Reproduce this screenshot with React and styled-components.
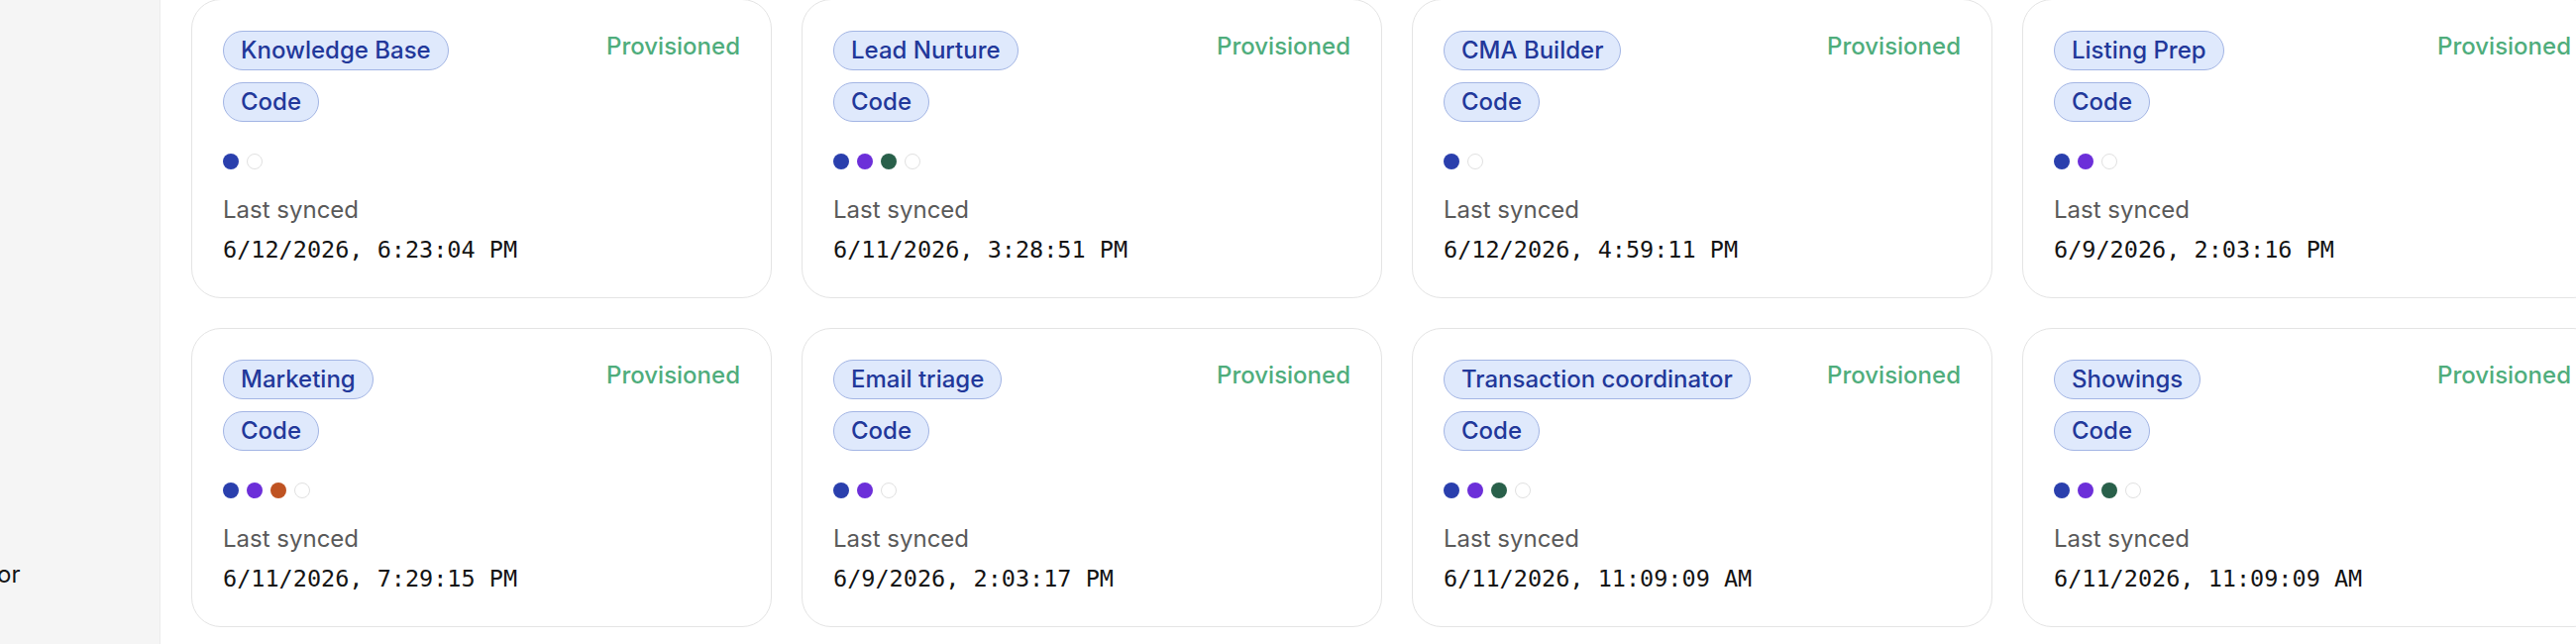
import React from "react";
import styled, { createGlobalStyle } from "styled-components";

const GlobalStyle = createGlobalStyle`
	html, body {
		margin: 0;
		padding: 0;
		background: #ffffff;
		overflow: hidden;
	}
	body {
		font-family: Inter, "Noto Sans", "Liberation Sans", sans-serif;
	}
`;

const DOT_COLORS = {
	blue: "#2a3fad",
	purple: "#6c2fd9",
	orange: "#bf5322",
	green: "#29604a",
};

const agents = [
	{ name: "Knowledge Base", dots: ["blue"], synced: "6/12/2026, 6:23:04 PM" },
	{ name: "Lead Nurture", dots: ["blue", "purple", "green"], synced: "6/11/2026, 3:28:51 PM" },
	{ name: "CMA Builder", dots: ["blue"], synced: "6/12/2026, 4:59:11 PM" },
	{ name: "Listing Prep", dots: ["blue", "purple"], synced: "6/9/2026, 2:03:16 PM" },
	{ name: "Marketing", dots: ["blue", "purple", "orange"], synced: "6/11/2026, 7:29:15 PM" },
	{ name: "Email triage", dots: ["blue", "purple"], synced: "6/9/2026, 2:03:17 PM" },
	{ name: "Transaction coordinator", dots: ["blue", "purple", "green"], synced: "6/11/2026, 11:09:09 AM" },
	{ name: "Showings", dots: ["blue", "purple", "green"], synced: "6/11/2026, 11:09:09 AM" },
];

const Layout = styled.div`
	display: flex;
	width: 2600px;
	height: 650px;
	overflow: hidden;
`;

const Sidebar = styled.aside`
	display: flex;
	flex-direction: column;
	flex: 0 0 161px;
	background: #f5f5f5;
	border-right: 1px solid #ececec;
	overflow: hidden;
`;

const NavLabel = styled.div`
	margin-top: auto;
	margin-bottom: 54px;
	margin-left: -3px;
	font-size: 24px;
	line-height: 32px;
	color: #141414;
	white-space: nowrap;
`;

const Main = styled.main`
	flex: 1;
	min-width: 0;
	padding: 0 31px;
	overflow: hidden;
`;

const Grid = styled.div`
	display: grid;
	grid-template-columns: repeat(4, 586px);
	gap: 30px;
	margin-top: -1px;
`;

const Card = styled.div`
	display: flex;
	flex-direction: column;
	box-sizing: border-box;
	height: 302px;
	padding: 31px 31px 0;
	border: 1.5px solid #e4e4e4;
	border-radius: 30px;
	background: #ffffff;
`;

const CardHead = styled.div`
	display: flex;
	justify-content: space-between;
	align-items: flex-start;
`;

const Tags = styled.div`
	display: flex;
	flex-direction: column;
	align-items: flex-start;
	gap: 12px;
`;

const Tag = styled.span`
	display: inline-block;
	padding: 4px 17px;
	border: 1.5px solid #a3b5e4;
	border-radius: 999px;
	background: #dfe9fc;
	color: #22389a;
	font-size: 24px;
	font-weight: 500;
	line-height: 30px;
	white-space: nowrap;
`;

const Status = styled.span`
	padding-top: 2px;
	color: #4fad7c;
	font-size: 24px;
	font-weight: 500;
	line-height: 28px;
`;

const Dots = styled.div`
	display: flex;
	gap: 8px;
	margin-top: 32px;
`;

const Dot = styled.span`
	box-sizing: border-box;
	width: 16px;
	height: 16px;
	border-radius: 50%;
	background: ${(props) => props.$color || "#ffffff"};
	border: ${(props) => (props.$color ? "none" : "1.5px solid #e1e1e1")};
`;

const SyncLabel = styled.div`
	margin-top: 25px;
	color: #5a5a5a;
	font-size: 24px;
	line-height: 32px;
`;

const SyncDate = styled.div`
	margin-top: 8px;
	color: #141414;
	font-family: "DejaVu Sans Mono", "Liberation Mono", monospace;
	font-size: 23.5px;
	line-height: 32px;
	white-space: nowrap;
`;

const AgentCard = ({ agent }) => (
	<Card>
		<CardHead>
			<Tags>
				<Tag>{agent.name}</Tag>
				<Tag>Code</Tag>
			</Tags>
			<Status>Provisioned</Status>
		</CardHead>
		<Dots>
			{agent.dots.map((d, i) => (
				<Dot key={i} $color={DOT_COLORS[d]} />
			))}
			<Dot />
		</Dots>
		<SyncLabel>Last synced</SyncLabel>
		<SyncDate>{agent.synced}</SyncDate>
	</Card>
);

const App = () => {
	return (
		<>
			<GlobalStyle />
			<Layout>
				<Sidebar>
					<NavLabel>or</NavLabel>
				</Sidebar>
				<Main>
					<Grid>
						{agents.map((a) => (
							<AgentCard key={a.name} agent={a} />
						))}
					</Grid>
				</Main>
			</Layout>
		</>
	);
};

export default App;
